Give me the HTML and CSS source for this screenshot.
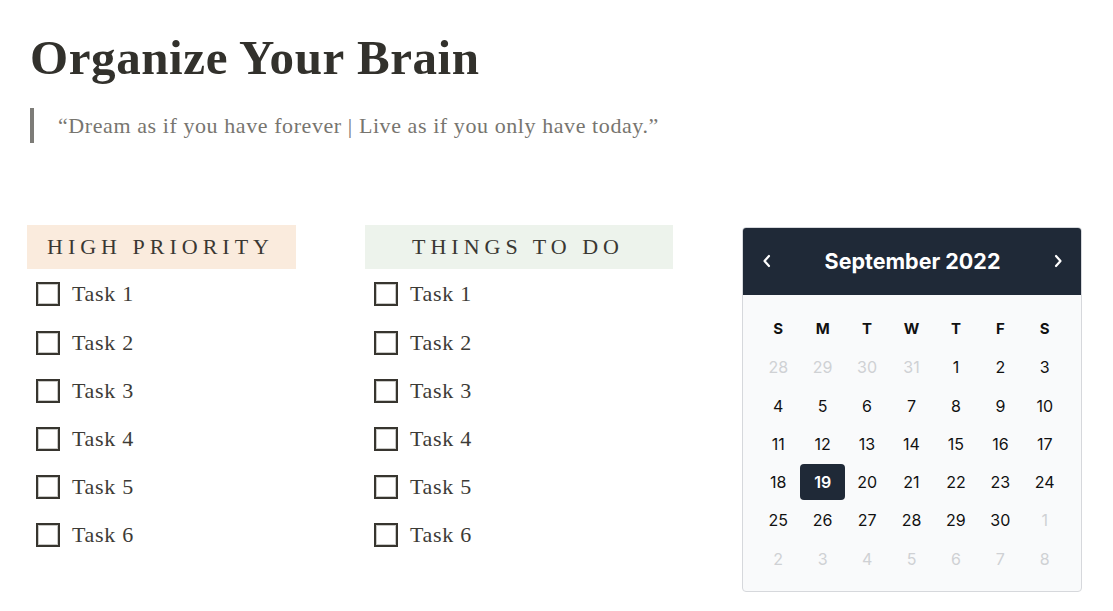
FILE: index.html
```html
<!DOCTYPE html>
<html lang="en">
<head>
    <meta charset="UTF-8">
    <meta name="viewport" content="width=device-width, initial-scale=1.0">
    <title>Organize Your Brain</title>
    <link rel="stylesheet" href="styles.css">
</head>
<body>
    <div class="page">
        <h1 class="title">Organize Your Brain</h1>
        <blockquote class="quote">“Dream as if you have forever | Live as if you only have today.”</blockquote>

        <div class="columns">
            <div class="task-list list-priority">
                <div class="list-head head-orange">HIGH PRIORITY</div>
                <div class="task"><span class="check"></span>Task 1</div>
                <div class="task"><span class="check"></span>Task 2</div>
                <div class="task"><span class="check"></span>Task 3</div>
                <div class="task"><span class="check"></span>Task 4</div>
                <div class="task"><span class="check"></span>Task 5</div>
                <div class="task"><span class="check"></span>Task 6</div>
            </div>

            <div class="task-list list-todo">
                <div class="list-head head-green">THINGS TO DO</div>
                <div class="task"><span class="check"></span>Task 1</div>
                <div class="task"><span class="check"></span>Task 2</div>
                <div class="task"><span class="check"></span>Task 3</div>
                <div class="task"><span class="check"></span>Task 4</div>
                <div class="task"><span class="check"></span>Task 5</div>
                <div class="task"><span class="check"></span>Task 6</div>
            </div>

            <div class="calendar">
                <div class="cal-head">
                    <span class="cal-nav">
                        <svg width="12" height="16" viewBox="0 0 12 16"><path d="M8 3 L3.5 8 L8 13" fill="none" stroke="#fff" stroke-width="2.2" stroke-linecap="round" stroke-linejoin="round"/></svg>
                    </span>
                    <span class="cal-title">September 2022</span>
                    <span class="cal-nav">
                        <svg width="12" height="16" viewBox="0 0 12 16"><path d="M4 3 L8.5 8 L4 13" fill="none" stroke="#fff" stroke-width="2.2" stroke-linecap="round" stroke-linejoin="round"/></svg>
                    </span>
                </div>
                <div class="cal-grid" id="calGrid">
                    <div class="dow">S</div>
                    <div class="dow">M</div>
                    <div class="dow">T</div>
                    <div class="dow">W</div>
                    <div class="dow">T</div>
                    <div class="dow">F</div>
                    <div class="dow">S</div>
                </div>
            </div>
        </div>
    </div>

    <script>
        var grid = document.getElementById('calGrid');
        var cells = '';

        // august tail
        [28, 29, 30, 31].forEach(function (d) {
            cells += '<div class="day muted">' + d + '</div>';
        });
        for (var d = 1; d <= 30; d++) {
            cells += '<div class="day' + (d == 19 ? ' today' : '') + '">' + d + '</div>';
        }
        // october head
        for (var n = 1; n <= 8; n++) {
            cells += '<div class="day muted">' + n + '</div>';
        }

        grid.innerHTML += cells;
    </script>
</body>
</html>
```

FILE: styles.css
```css
body {
    margin: 0;
    background-color: #fff;
    color: #37352f;
    font-family: "Liberation Serif", serif;
}
.page {
    padding: 29px 27px 0 27px;
}
.title {
    font-size: 49px;
    font-weight: bold;
    letter-spacing: 0.6px;
    margin: 0 0 0 3px;
    line-height: 1.2;
    color: #32312c;
}
.quote {
    margin: 20px 0 0 3px;
    padding: 2px 0 2px 24px;
    border-left: 4px solid #7d7c78;
    font-size: 22px;
    letter-spacing: 0.58px;
    line-height: 31px;
    color: #77756f;
}
.columns {
    display: flex;
    align-items: flex-start;
    margin-top: 82px;
}
.list-priority {
    width: 269px;
    margin-right: 69px;
}
.list-todo {
    width: 308px;
    margin-right: 69px;
}
.list-head {
    height: 44px;
    line-height: 44px;
    text-align: center;
    font-size: 22px;
    letter-spacing: 5px;
    padding-right: 2px;
    color: #3a3833;
}
.head-orange {
    background-color: #faebdd;
}
.head-green {
    background-color: #edf3ec;
}
.task {
    display: flex;
    align-items: center;
    height: 48px;
    font-size: 22px;
    letter-spacing: 0.7px;
    color: #3d3b36;
    padding-left: 9px;
}
.list-head + .task {
    height: 50px;
}
.check {
    width: 20px;
    height: 20px;
    border: 2px solid #37352f;
    box-shadow: inset 0 0 0 1px #c9c9c6;
    margin-right: 12px;
    flex-shrink: 0;
}
.calendar {
    width: 340px;
    margin-top: 2px;
    border: 1px solid #d6d8dc;
    border-radius: 4px;
    background-color: #f9fafb;
    font-family: Inter, sans-serif;
    overflow: hidden;
    box-sizing: border-box;
}
.cal-head {
    display: flex;
    align-items: center;
    justify-content: space-between;
    height: 68px;
    margin: -1px -1px 0 -1px;
    padding: 0 18px 0 19px;
    background-color: #1f2937;
    color: #fff;
}
.cal-nav {
    display: flex;
    align-items: center;
}
.cal-title {
    font-size: 21.5px;
    font-weight: bold;
    letter-spacing: 0;
}
.cal-grid {
    display: grid;
    grid-template-columns: repeat(7, 1fr);
    grid-auto-rows: 38.3px;
    padding: 15px 14px 13px 13px;
}
.dow {
    display: flex;
    align-items: center;
    justify-content: center;
    font-size: 15px;
    font-weight: bold;
    color: #111;
}
.day {
    display: flex;
    align-items: center;
    justify-content: center;
    font-size: 16px;
    color: #111;
    border-radius: 4px;
}
.day.muted {
    color: #cfd1d4;
}
.day.today {
    background-color: #1f2937;
    color: #fff;
    font-weight: 600;
    margin: 1px 0;
}
```
